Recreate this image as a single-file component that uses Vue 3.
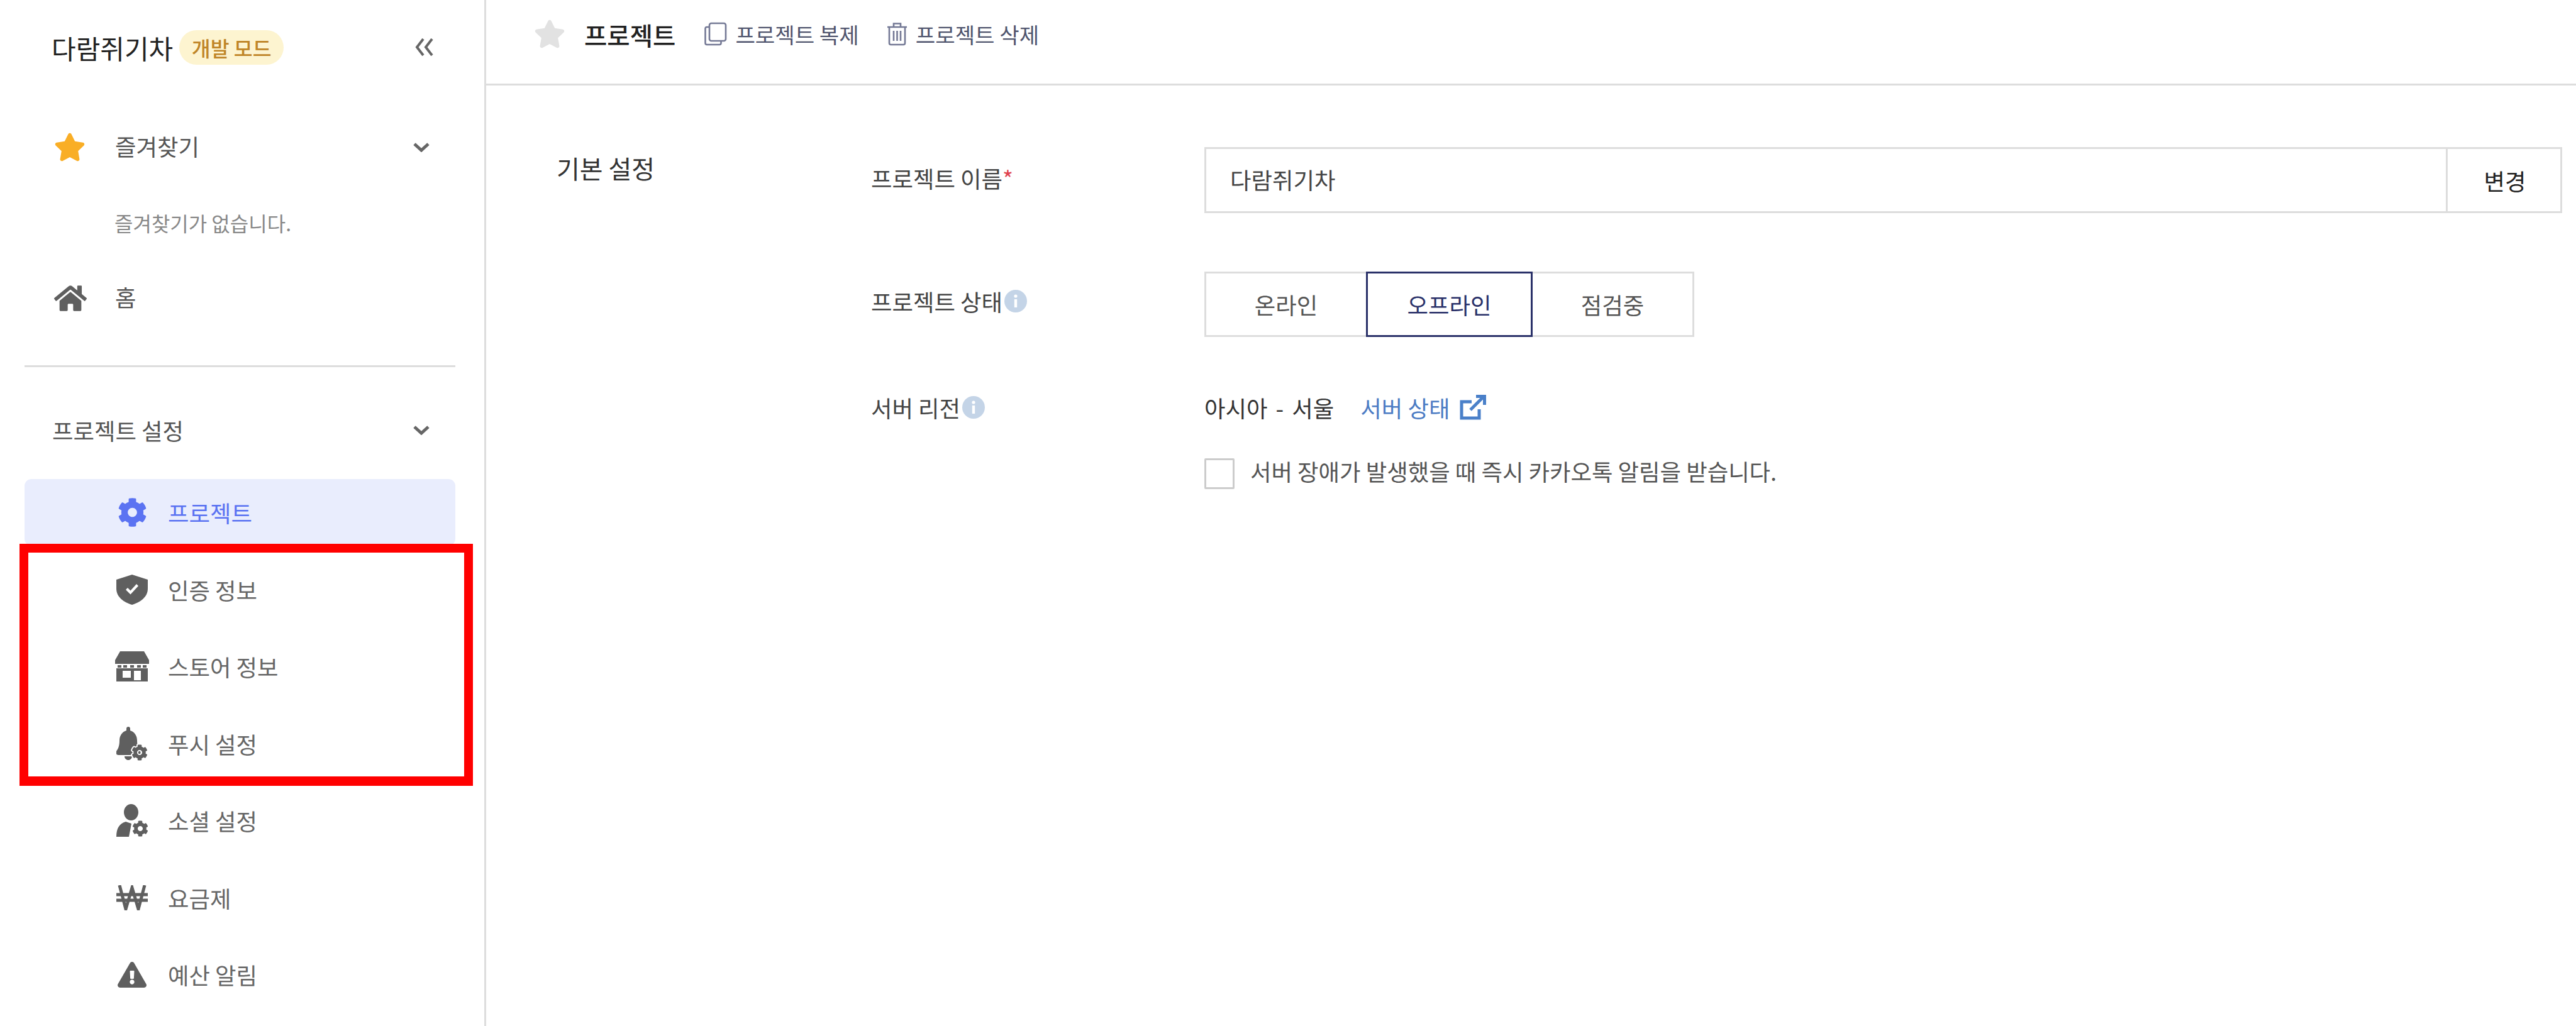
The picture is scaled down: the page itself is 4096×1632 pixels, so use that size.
<script setup>
const cogD = 'M487.4 315.7l-42.6-24.6c4.3-23.2 4.3-47 0-70.2l42.6-24.6c4.9-2.8 7.1-8.6 5.5-14-11.1-35.6-30-67.8-54.7-94.6-3.8-4.1-10-5.1-14.8-2.3L380.8 110c-17.9-15.4-38.5-27.3-60.8-35.1V25.8c0-5.6-3.9-10.5-9.4-11.7-36.7-8.2-74.3-7.8-109.2 0-5.5 1.2-9.4 6.1-9.4 11.7V75c-22.2 7.9-42.8 19.8-60.8 35.1L88.7 85.5c-4.9-2.8-11-1.9-14.8 2.3-24.7 26.7-43.6 58.9-54.7 94.6-1.7 5.4.6 11.2 5.5 14L67.3 221c-4.3 23.2-4.3 47 0 70.2l-42.6 24.6c-4.9 2.8-7.1 8.6-5.5 14 11.1 35.6 30 67.8 54.7 94.6 3.8 4.1 10 5.1 14.8 2.3l42.6-24.6c17.9 15.4 38.5 27.3 60.8 35.1v49.2c0 5.6 3.9 10.5 9.4 11.7 36.7 8.2 74.3 7.8 109.2 0 5.5-1.2 9.4-6.1 9.4-11.7v-49.2c22.2-7.9 42.8-19.8 60.8-35.1l42.6 24.6c4.9 2.8 11 1.9 14.8-2.3 24.7-26.7 43.6-58.9 54.7-94.6 1.5-5.5-.7-11.3-5.6-14.1zM256 336c-44.1 0-80-35.9-80-80s35.9-80 80-80 80 35.9 80 80-35.9 80-80 80z'
const starD = 'M259.3 17.8L194 150.2 47.9 171.5c-26.2 3.8-36.7 36.1-17.7 54.6l105.7 103-25 145.5c-4.5 26.3 23.2 46 46.4 33.7L288 439.6l130.7 68.7c23.2 12.2 50.9-7.4 46.4-33.7l-25-145.5 105.7-103c19-18.5 8.5-50.8-17.7-54.6L382 150.2 316.7 17.8c-11.7-23.6-45.6-23.9-57.4 0z'
const homeD = 'M280.37 148.26L96 300.11V464a16 16 0 0 0 16 16l112.06-.29a16 16 0 0 0 15.92-16V368a16 16 0 0 1 16-16h64a16 16 0 0 1 16 16v95.64a16 16 0 0 0 16 16.05L464 480a16 16 0 0 0 16-16V300L295.67 148.26a12.19 12.19 0 0 0-15.3 0zM571.6 251.47L488 182.56V44.05a12 12 0 0 0-12-12h-56a12 12 0 0 0-12 12v72.61L318.47 43a48 48 0 0 0-61 0L4.34 251.47a12 12 0 0 0-1.6 16.9l25.5 31A12 12 0 0 0 45.15 301l235.22-193.74a12.19 12.19 0 0 1 15.3 0L530.9 301a12 12 0 0 0 16.9-1.6l25.5-31a12 12 0 0 0-1.7-16.93z'
const bellD = 'M13 47C13 50.500 15.800 53 19 53S25 50.500 25 47ZM19 0C20.700 0 22 1.300 22 3V6C29 8 33 14.500 33 22 33 32 36 36 38 39 39.500 41.500 38 45 35 45H3C0 45-1.500 41.500 0 39 2 36 5 32 5 22 5 14.500 9 8 16 6V3C16 1.300 17.300 0 19 0Z'
const warnD = 'M569.517 440.013C587.975 472.007 564.806 512 527.94 512H48.054c-36.937 0-59.999-40.055-41.577-71.987L246.423 24.035c18.467-32.009 64.72-31.951 83.154 0l239.94 416zM288 354c-25.405 0-46 20.595-46 46s20.595 46 46 46 46-20.595 46-46-20.595-46-46-46zm-43.673-165.346l7.418 136c.347 6.364 5.609 11.346 11.982 11.346h48.546c6.373 0 11.635-4.982 11.982-11.346l7.418-136c.375-6.874-5.098-12.654-11.982-12.654h-63.383c-6.884 0-12.356 5.78-11.981 12.654z'

const navItems = [
  { label: '프로젝트', active: true, w: 47, h: 48, vb: '0 0 512 512', d: cogD },
  { label: '인증 정보', w: 50, h: 48, vb: '0 0 50 48', d: 'M25 0L50 8V22C50 36 38 44 25 48 12 44 0 36 0 22V8ZM15 24L18 21 22.500 25.500 32 15 35 18 22.500 31.500Z' },
  { label: '스토어 정보', w: 54, h: 48, vb: '0 0 54 48', d: 'M8 0H46L54 14V20H0V14ZM4 22H10V26H4ZM13 22H19V26H13ZM24 22H30V26H24ZM35 22H41V26H35ZM44 22H50V26H44ZM2 27H52V48H2ZM12 31V42H25V31ZM30 31V46H41V31Z' },
  { label: '푸시 설정', w: 50, h: 54, vb: '0 0 50 54', d: bellD, cog: { x: 24, y: 28, size: 26 } },
  { label: '소셜 설정', w: 51, h: 52, vb: '0 0 51 52', d: 'M23.500 0C30 0 35 6 35 13S30 26 23.500 26 12 20 12 13 17 0 23.500 0ZM0 52C0 38 5 31 15 28L24 31 20 52Z', cog: { x: 25, y: 26, size: 26 } },
  { label: '요금제', w: 50, h: 40, vb: '0 0 50 40', stroke: 'M5 0L15 38 25 4 35 38 45 0M0 15H50M0 24H50' },
  { label: '예산 알림', w: 46, h: 41, vb: '0 0 576 512', d: warnD }
]
</script>

<template>
  <div class="page">
    <aside class="sidebar">
      <div class="brand">
        <span class="brand-name">다람쥐기차</span>
        <span class="badge">개발 모드</span>
        <svg class="collapse" viewBox="0 0 30 28" width="30" height="28">
          <path d="M13 1L3 14 13 27M27 1L17 14 27 27" />
        </svg>
      </div>

      <div class="top-row first">
        <svg class="top-icon star" viewBox="0 0 576 512" width="50" height="46"><path :d="starD" /></svg>
        <span class="top-label">즐겨찾기</span>
        <svg class="chev" viewBox="0 0 28 16" width="28" height="16"><path d="M3 3L14 13 25 3" /></svg>
      </div>
      <p class="empty">즐겨찾기가 없습니다.</p>
      <div class="top-row home">
        <svg class="top-icon" viewBox="0 0 576 512" width="52" height="47"><path :d="homeD" /></svg>
        <span class="top-label">홈</span>
      </div>

      <div class="divider"></div>

      <div class="group-head">
        <span class="group-label">프로젝트 설정</span>
        <svg class="chev" viewBox="0 0 28 16" width="28" height="16"><path d="M3 3L14 13 25 3" /></svg>
      </div>

      <nav class="nav">
        <div v-for="item in navItems" :key="item.label" class="nav-item" :class="{ active: item.active }">
          <span class="nav-icon">
            <svg :viewBox="item.vb" :width="item.w" :height="item.h">
              <path v-if="item.d" :d="item.d" fill="currentColor" fill-rule="evenodd" />
              <path v-if="item.stroke" :d="item.stroke" fill="none" stroke="currentColor" stroke-width="5" />
              <svg v-if="item.cog" :x="item.cog.x" :y="item.cog.y" :width="item.cog.size" :height="item.cog.size" viewBox="0 0 512 512" overflow="visible">
                <path :d="cogD" fill="currentColor" stroke="#fff" stroke-width="70" paint-order="stroke" />
              </svg>
            </svg>
          </span>
          <span>{{ item.label }}</span>
        </div>
      </nav>

      <div class="highlight"></div>
    </aside>

    <main class="main">
      <header class="header">
        <svg viewBox="0 0 576 512" width="50" height="46" class="head-star"><path :d="starD" /></svg>
        <h1 class="head-title">프로젝트</h1>
        <span class="head-action copy">
          <svg viewBox="0 0 36 38" width="36" height="38" class="line-icon">
            <path d="M7 8H4A2.500 2.500 0 0 0 1.500 10.500V33.500A2.500 2.500 0 0 0 4 36H24A2.500 2.500 0 0 0 26.500 33.500V30" />
            <rect x="8" y="2" width="26" height="28" rx="3" />
          </svg>
          프로젝트 복제
        </span>
        <span class="head-action trash">
          <svg viewBox="0 0 33 38" width="33" height="38" class="line-icon">
            <path d="M1 8H32M11 8V2.500H22V8M4 8V33.500A2.500 2.500 0 0 0 6.500 36H26.500A2.500 2.500 0 0 0 29 33.500V8M11 14V30M16.500 14V30M22 14V30" />
          </svg>
          프로젝트 삭제
        </span>
      </header>

      <section class="section">
        <h2 class="section-title">기본 설정</h2>
        <div class="form">
          <div class="form-row name-row">
            <label class="label">프로젝트 이름<span class="req">*</span></label>
            <div class="name-field">
              <span class="name-value">다람쥐기차</span>
              <button class="name-btn">변경</button>
            </div>
          </div>

          <div class="form-row state-row">
            <label class="label">프로젝트 상태
              <svg class="info" viewBox="0 0 36 36" width="36" height="36">
                <circle cx="18" cy="18" r="18" fill="#c4d4e7" />
                <circle cx="18" cy="10" r="2.600" fill="#fff" />
                <rect x="15.800" y="15" width="4.400" height="13" fill="#fff" />
              </svg>
            </label>
            <div class="segments">
              <button class="segment">온라인</button>
              <button class="segment selected">오프라인</button>
              <button class="segment">점검중</button>
            </div>
          </div>

          <div class="form-row region-row">
            <label class="label">서버 리전
              <svg class="info" viewBox="0 0 36 36" width="36" height="36">
                <circle cx="18" cy="18" r="18" fill="#c4d4e7" />
                <circle cx="18" cy="10" r="2.600" fill="#fff" />
                <rect x="15.800" y="15" width="4.400" height="13" fill="#fff" />
              </svg>
            </label>
            <div class="region-value">
              <span class="region-name">아시아 - 서울</span>
              <span class="status-link">서버 상태
                <svg viewBox="0 0 42 40" width="42" height="40">
                  <path d="M31 23V37H3V11H19M17 24L38 3M26 2.500H39.500V16" />
                </svg>
              </span>
            </div>
          </div>

          <div class="form-row check-row">
            <span></span>
            <div class="check-line">
              <span class="checkbox"></span>
              <span class="check-text">서버 장애가 발생했을 때 즉시 카카오톡 알림을 받습니다.</span>
            </div>
          </div>
        </div>
      </section>
    </main>
  </div>
</template>

<style scoped>
.page {
  display: flex;
  width: 4096px;
  height: 1632px;
  overflow: hidden;
  background: #fff;
  font-family: "Noto Sans CJK KR", "Noto Sans", sans-serif;
  font-size: 36.400px;
  color: #444;
}
.sidebar {
  position: relative;
  flex: 0 0 773px;
  box-sizing: border-box;
  padding-left: 39px;
  padding-right: 46px;
  border-right: 3px solid #ddd;
}
.brand {
  display: flex;
  align-items: center;
  height: 150px;
  padding-left: 43px;
}
.brand-name {
  font-size: 42px;
  color: #222;
}
.badge {
  display: flex;
  align-items: center;
  justify-content: center;
  width: 166px;
  height: 55px;
  margin-left: 10px;
  border-radius: 28px;
  background: #fdf4d0;
  color: #bf8527;
  font-size: 32.500px;
  font-weight: 500;
}
.collapse {
  margin-left: auto;
  margin-right: 34px;
  fill: none;
  stroke: #666;
  stroke-width: 4;
}
.top-row {
  display: flex;
  align-items: center;
  height: 106px;
  padding-left: 47px;
}
.top-row.first {
  margin-top: 31px;
}
.top-row.home {
  margin-top: 37px;
}
.top-icon {
  flex: none;
  margin-right: 45px;
  fill: #5f5f5f;
}
.top-icon.star {
  margin-right: 47px;
  fill: #f9ae26;
}
.top-label {
  position: relative;
  top: -2px;
  color: #555;
}
.group-label {
  color: #555;
}
.chev {
  flex: none;
  margin-left: auto;
  margin-right: 40px;
  fill: none;
  stroke: #666;
  stroke-width: 5;
}
.empty {
  display: flex;
  align-items: center;
  height: 60px;
  margin: 37px 0 0;
  padding-left: 143px;
  font-size: 32px;
  color: #888;
}
.divider {
  height: 3px;
  margin-top: 54px;
  background: #ddd;
}
.group-head {
  display: flex;
  align-items: center;
  height: 106px;
  margin-top: 47px;
  padding-left: 44px;
}
.nav {
  display: flex;
  flex-direction: column;
  gap: 16.500px;
  margin-top: 25px;
}
.nav-item {
  display: flex;
  align-items: center;
  height: 106px;
  padding-left: 141px;
  border-radius: 11px;
  color: #666;
}
.nav-item.active {
  background: #e9edfd;
  color: #5b73f2;
}
.nav-icon {
  display: flex;
  align-items: center;
  justify-content: center;
  width: 60px;
  margin-right: 27px;
  color: #5f5f5f;
}
.active .nav-icon {
  color: #5b73f2;
}
.highlight {
  position: absolute;
  left: 31px;
  top: 865px;
  box-sizing: border-box;
  width: 721px;
  height: 385px;
  border: 15px solid #f00;
  border-width: 14px 14px 15px;
  pointer-events: none;
}
.main {
  flex: 1;
  min-width: 0;
}
.header {
  display: flex;
  align-items: center;
  box-sizing: border-box;
  height: 136px;
  padding: 0 0 25px 76px;
  border-bottom: 3px solid #ddd;
}
.head-star {
  fill: #e2e2e2;
}
.head-title {
  margin: 0 0 0 30px;
  font-size: 39.500px;
  font-weight: 500;
  color: #222;
}
.head-action {
  display: flex;
  align-items: center;
  gap: 13px;
  font-size: 34.200px;
  color: #50556e;
}
.copy {
  margin-left: 46px;
}
.trash {
  margin-left: 44px;
}
.line-icon {
  flex: none;
  fill: none;
  stroke: #747995;
  stroke-width: 2.600;
}
.section {
  display: flex;
  padding: 98px 22px 0 112px;
}
.section-title {
  flex: 0 0 500px;
  margin: 9px 0 0;
  font-size: 40px;
  font-weight: 400;
  line-height: 48px;
  color: #333;
}
.form {
  flex: 1;
  min-width: 0;
}
.form-row {
  display: grid;
  grid-template-columns: 530px 1fr;
}
.label {
  display: flex;
  align-items: center;
  color: #444;
}
.info {
  flex: none;
  margin-left: 3px;
}
.req {
  color: #e0434f;
}
.name-row .label {
  padding-bottom: 8px;
}
.name-field {
  display: flex;
  align-items: center;
  box-sizing: border-box;
  height: 105px;
  border: 3px solid #ddd;
}
.name-value {
  flex: 1;
  padding: 0 0 4px 38px;
  color: #444;
}
.name-btn {
  width: 182px;
  height: 100%;
  padding: 0 0 0 3px;
  border: 0;
  border-left: 3px solid #ddd;
  background: #fff;
  font: inherit;
  color: #222;
}
.state-row {
  margin-top: 93px;
}
.state-row .label {
  padding-bottom: 10px;
}
.segments {
  display: flex;
}
.segment {
  width: 260px;
  height: 104px;
  padding: 0;
  border: 3px solid #ddd;
  background: #fff;
  font: inherit;
  color: #555;
}
.segment + .segment {
  margin-left: -3px;
}
.segment.selected {
  position: relative;
  width: 265px;
  border-color: #2a3169;
  color: #2a3169;
}
.region-row {
  margin-top: 86px;
  height: 50px;
  align-items: center;
}
.region-value {
  display: flex;
  align-items: center;
  color: #333;
}
.region-name {
  word-spacing: 5px;
}
.status-link {
  display: flex;
  align-items: center;
  gap: 16px;
  margin-left: 42px;
  color: #4c7cc4;
}
.status-link svg {
  fill: none;
  stroke: #4a80c9;
  stroke-width: 5;
}
.check-row {
  margin-top: 55px;
}
.check-line {
  display: flex;
  align-items: center;
  gap: 25px;
  color: #555;
}
.check-text {
  position: relative;
  top: -4px;
}
.checkbox {
  flex: none;
  box-sizing: border-box;
  width: 48px;
  height: 49px;
  border: 3px solid #ccc;
  border-radius: 2px;
}
</style>

<style>
html, body {
  background: #fff;
}
</style>
